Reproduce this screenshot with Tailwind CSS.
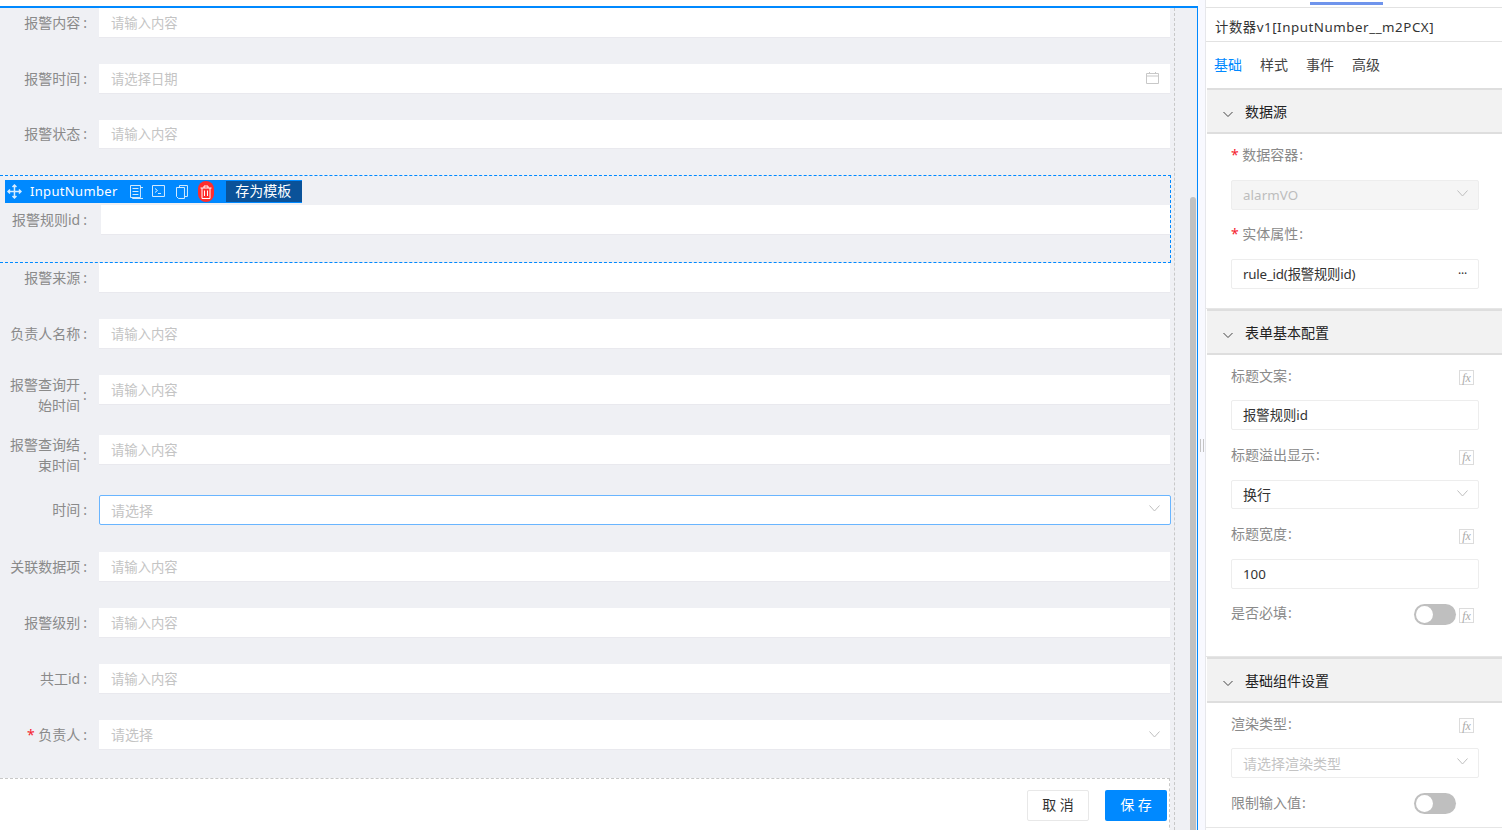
<!DOCTYPE html>
<html lang="zh-CN">
<head>
  <meta charset="UTF-8" />
  <title>表单设计</title>
  <script src="https://cdn.jsdelivr.net/npm/@tailwindcss/browser@4"></script>
</head>
<body class="w-[1502px] h-[830px] overflow-hidden bg-white font-['Noto_Sans','Noto_Sans_CJK_SC',sans-serif] text-[13.33px]">
<div class="flex h-[830px]">

  <!-- canvas -->
  <div class="w-[1198px] pt-[6px] shrink-0">
    <div class="relative h-[824px] border-t-2 border-r-[1.5px] border-[#0089ff] bg-[#eff0f4] overflow-hidden">
      <div class="w-[1170px]">

        <div class="flex h-[30px] mb-[26px]">
          <div class="w-[99px] pr-[12px] text-right text-[14px] leading-[30px] text-[#8a8a8a]">报警内容<span class="ml-[3px]">:</span></div>
          <div class="flex-1 bg-white border-b border-[#e9e9ee] px-[12px] leading-[30px] text-[#c4c4c4]">请输入内容</div>
        </div>
        <div class="flex h-[30px] mb-[26px]">
          <div class="w-[99px] pr-[12px] text-right text-[14px] leading-[30px] text-[#8a8a8a]">报警时间<span class="ml-[3px]">:</span></div>
          <div class="flex-1 flex items-center justify-between bg-white border-b border-[#e9e9ee] pl-[12px] pr-[11px] leading-[30px] text-[#c4c4c4]">
            <span>请选择日期</span>
            <svg width="13" height="13" viewBox="0 0 13 13" fill="none" stroke="#c8c8c8" class="mb-[2px]"><path d="M.5 2.500h12v10H.5zM.5 5h12M3.500 1v2M9.500 1v2"/></svg>
          </div>
        </div>
        <div class="flex h-[29px] mb-[26px]">
          <div class="w-[99px] pr-[12px] text-right text-[14px] leading-[28px] text-[#8a8a8a]">报警状态<span class="ml-[3px]">:</span></div>
          <div class="flex-1 bg-white border-b border-[#e9e9ee] px-[12px] leading-[29px] text-[#c4c4c4]">请输入内容</div>
        </div>

        <!-- selected item -->
        <div class="relative h-[88px] mr-[-1px] border border-l-0 border-dashed border-[#0089ff] pt-[29px]">
          <div class="absolute left-[5px] top-[4px] flex items-center w-[297px] h-[23px] bg-[#0089ff] text-white">
            <svg class="ml-[2px]" width="15" height="15" viewBox="0 0 15 15" fill="none" stroke="#d5ecff" stroke-width="1.500"><path d="M7.500 1v13M1 7.500h13M5.500 3l2-2 2 2M5.500 12l2 2 2-2M3 5.500l-2 2 2 2M12 5.500l2 2-2 2"/></svg>
            <span class="ml-[8px] w-[100px] text-[13px] tracking-[0.35px]">InputNumber</span>
            <svg width="14" height="14" viewBox="0 0 14 14" fill="none" stroke="#d5ecff"><path d="M.5.500h10v12H.5zM10.500 2.500h3v11h-11v-1M2.500 3.500h6M2.500 6.500h6M2.500 9.500h6"/></svg>
            <svg class="ml-[9px]" width="13" height="13" viewBox="0 0 13 13" fill="none" stroke="#d5ecff"><path d="M.5.500h12v11H.5zM3 3.500l2.500 2L3 7.500M6 8.500h3"/></svg>
            <svg class="ml-[11px]" width="12" height="14" viewBox="0 0 12 14" fill="none" stroke="#d5ecff"><path d="M3.500 2.500v-2h8v11H9M.5 2.500h8v11h-6l-2-2z"/></svg>
            <div class="ml-[10px] w-[16px] h-[21px] rounded-[8px] bg-[#ff2d2d] flex items-center justify-center">
              <svg width="12" height="14" viewBox="0 0 12 14" fill="none" stroke="#fff"><path d="M.5 3h11M4 3V1h4v2M2 3v10.500h8V3M4.500 5.500v5.500M7.500 5.500v5.500"/></svg>
            </div>
            <div class="ml-[12px] w-[76px] h-[21px] bg-[#0a5299] pr-[2px] text-center text-[14px] leading-[20px]">存为模板</div>
          </div>
          <div class="flex h-[30px]">
            <div class="w-[101px] pr-[14px] text-right text-[14px] leading-[30px] text-[#8a8a8a]">报警规则id<span class="ml-[3px]">:</span></div>
            <div class="flex-1 bg-white border-b border-[#e9e9ee]"></div>
          </div>
        </div>

        <div class="flex h-[30px] mb-[26px]">
          <div class="w-[99px] pr-[12px] text-right text-[14px] leading-[30px] text-[#8a8a8a]">报警来源<span class="ml-[3px]">:</span></div>
          <div class="flex-1 bg-white border-b border-[#e9e9ee]"></div>
        </div>
        <div class="flex h-[30px] mb-[26px]">
          <div class="w-[99px] pr-[12px] text-right text-[14px] leading-[30px] text-[#8a8a8a]">负责人名称<span class="ml-[3px]">:</span></div>
          <div class="flex-1 bg-white border-b border-[#e9e9ee] px-[12px] leading-[30px] text-[#c4c4c4]">请输入内容</div>
        </div>

        <div class="flex h-[34px] mb-[26px]">
          <div class="flex items-center w-[99px] h-[37px] pl-[10px] overflow-hidden text-[14px] leading-[21px] text-[#8a8a8a] shrink-0">
            <span class="w-[70px] mt-[2px] text-right shrink-0">报警查询开始时间</span><span class="ml-[3px] mt-[2px]">:</span>
          </div>
          <div class="flex-1 h-[30px] bg-white border-b border-[#e9e9ee] px-[12px] leading-[30px] text-[#c4c4c4]">请输入内容</div>
        </div>
        <div class="flex h-[34px] mb-[26px]">
          <div class="flex items-center w-[99px] h-[37px] pl-[10px] overflow-hidden text-[14px] leading-[21px] text-[#8a8a8a] shrink-0">
            <span class="w-[70px] mt-[2px] text-right shrink-0">报警查询结束时间</span><span class="ml-[3px] mt-[2px]">:</span>
          </div>
          <div class="flex-1 h-[30px] bg-white border-b border-[#e9e9ee] px-[12px] leading-[30px] text-[#c4c4c4]">请输入内容</div>
        </div>

        <div class="flex h-[30px] mb-[27px]">
          <div class="w-[99px] pr-[12px] text-right text-[14px] leading-[30px] text-[#8a8a8a]">时间<span class="ml-[3px]">:</span></div>
          <div class="flex-1 flex items-center justify-between mr-[-1px] bg-white border border-[#69b5ff] rounded-[2px] pl-[11px] pr-[10px] text-[14px] text-[#c4c4c4]">
            <span>请选择</span>
            <svg width="11" height="7" viewBox="0 0 11 7" fill="none" stroke="#bfbfbf" class="mb-[3px]"><path d="M.5.500l5 5.500 5-5.500"/></svg>
          </div>
        </div>
        <div class="flex h-[30px] mb-[26px]">
          <div class="w-[99px] pr-[12px] text-right text-[14px] leading-[30px] text-[#8a8a8a]">关联数据项<span class="ml-[3px]">:</span></div>
          <div class="flex-1 bg-white border-b border-[#e9e9ee] px-[12px] leading-[30px] text-[#c4c4c4]">请输入内容</div>
        </div>
        <div class="flex h-[30px] mb-[26px]">
          <div class="w-[99px] pr-[12px] text-right text-[14px] leading-[30px] text-[#8a8a8a]">报警级别<span class="ml-[3px]">:</span></div>
          <div class="flex-1 bg-white border-b border-[#e9e9ee] px-[12px] leading-[30px] text-[#c4c4c4]">请输入内容</div>
        </div>
        <div class="flex h-[30px] mb-[26px]">
          <div class="w-[99px] pr-[12px] text-right text-[14px] leading-[30px] text-[#8a8a8a]">共工id<span class="ml-[3px]">:</span></div>
          <div class="flex-1 bg-white border-b border-[#e9e9ee] px-[12px] leading-[30px] text-[#c4c4c4]">请输入内容</div>
        </div>
        <div class="flex h-[30px] mb-[28px]">
          <div class="w-[99px] pr-[12px] text-right text-[14px] leading-[30px] text-[#8a8a8a]"><span class="text-[#f5222d]">* </span>负责人<span class="ml-[3px]">:</span></div>
          <div class="flex-1 flex items-center justify-between bg-white border-b border-[#e9e9ee] pl-[12px] pr-[10px] text-[14px] text-[#c4c4c4]">
            <span>请选择</span>
            <svg width="11" height="7" viewBox="0 0 11 7" fill="none" stroke="#bfbfbf"><path d="M.5.500l5 5.500 5-5.500"/></svg>
          </div>
        </div>

        <!-- footer -->
        <div class="flex justify-end gap-[16px] h-[60px] bg-white border-t border-r border-dashed border-[#c8c8c8] pt-[11px] pr-[2px]">
          <div class="w-[62px] h-[31px] bg-white border border-[#e8e8e8] rounded-[2px] text-center text-[14px] leading-[27px] text-[#333]">取 消</div>
          <div class="w-[62px] h-[31px] bg-[#0089ff] rounded-[2px] text-center text-[14px] leading-[29px] text-white">保 存</div>
        </div>
      </div>

      <!-- dashed guide and scrollbar -->
      <div class="absolute left-[1174px] top-0 bottom-0 border-l border-dashed border-[#c8c8c8]"></div>
      <div class="absolute left-[1190px] top-[189px] bottom-0 w-[6px] bg-[#c1c1c1] rounded-t-[3px]"></div>
    </div>
  </div>

  <!-- resize gutter -->
  <div class="relative w-[8px] shrink-0 bg-[#f8f9ff] border-r border-[#e6e7eb]">
    <div class="absolute left-[2px] top-[439px] w-[4px] h-[13px] border-x border-[#c4c4c4]"></div>
  </div>

  <!-- properties panel -->
  <div class="flex-1 min-w-0">
    <div class="h-[6px] border-b border-[#e2e2e2]">
      <div class="ml-[104px] w-[73px] h-[3px] mt-[2px] bg-[#6f94ec]"></div>
    </div>
    <div class="h-[35px] pl-[9px] border-b border-[#e2e2e2] leading-[41px] text-[13.33px] tracking-[0.55px] text-[#333] mt-[-1px]">计数器v1[InputNumber__m2PCX]</div>
    <div class="flex gap-[18px] h-[46px] pl-[8px] pb-[1px] items-center text-[14px] text-[#444]">
      <span class="text-[#0089ff]">基础</span><span>样式</span><span>事件</span><span>高级</span>
    </div>

    <div class="flex items-center h-[46px] ml-[1px] bg-[#f2f2f2] border-y-2 border-[#dedede] pl-[16px] text-[14px] text-[#222]">
      <svg width="10" height="7" viewBox="0 0 10 7" fill="none" stroke="#444" class="mt-[7px]"><path d="M.5 1l4.500 4.500L9.500 1"/></svg>
      <span class="ml-[12px]">数据源</span>
    </div>
    <div class="h-[175px] pl-[25px] pr-[23px] border-b border-[#e6e6e6]">
      <div class="h-[46px] pt-[10px] leading-[22px] text-[14px] text-[#8a8a8a]"><span class="text-[#f5222d]">* </span>数据容器<span class="ml-[1px]">:</span></div>
      <div class="flex items-center justify-between h-[30px] bg-[#f5f5f5] border border-[#ededed] rounded-[2px] pl-[11px] pr-[10px] tracking-[0.1px] text-[#bdbdbd]">
        <span class="pt-[1px]">alarmVO</span>
        <svg width="11" height="7" viewBox="0 0 11 7" fill="none" stroke="#bfbfbf" class="mb-[3px]"><path d="M.5.500l5 5.500 5-5.500"/></svg>
      </div>
      <div class="h-[49px] pt-[13px] leading-[22px] text-[14px] text-[#8a8a8a]"><span class="text-[#f5222d]">* </span>实体属性<span class="ml-[1px]">:</span></div>
      <div class="flex items-center justify-between h-[30px] border border-[#ededed] rounded-[2px] pl-[11px] pr-[11px] tracking-[-0.2px] text-[#333]">
        <span class="pt-[1px]">rule_id(报警规则id)</span><span class="text-[12px]">···</span>
      </div>
    </div>

    <div class="flex items-center h-[46px] ml-[1px] bg-[#f2f2f2] border-y-2 border-[#dedede] pl-[16px] text-[14px] text-[#222]">
      <svg width="10" height="7" viewBox="0 0 10 7" fill="none" stroke="#444" class="mt-[7px]"><path d="M.5 1l4.500 4.500L9.500 1"/></svg>
      <span class="ml-[12px]">表单基本配置</span>
    </div>
    <div class="h-[302px] pl-[25px] pr-[23px] border-b border-[#e6e6e6]">
      <div class="flex items-center justify-between h-[45px] pr-[5px] text-[14px] text-[#8a8a8a]">
        <span class="mb-[5px]">标题文案<span class="ml-[1px]">:</span></span>
        <span class="flex items-center justify-center w-[15px] h-[15px] border border-[#dcdcdc] font-['Liberation_Serif',serif] italic text-[12px] text-[#aaa]">fx</span>
      </div>
      <div class="h-[30px] border border-[#ededed] rounded-[2px] px-[11px] leading-[29px] text-[#333]">报警规则id</div>
      <div class="flex items-center justify-between h-[50px] pr-[5px] text-[14px] text-[#8a8a8a]">
        <span class="mb-[2px]">标题溢出显示<span class="ml-[1px]">:</span></span>
        <span class="flex items-center justify-center w-[15px] h-[15px] mt-[4px] border border-[#dcdcdc] font-['Liberation_Serif',serif] italic text-[12px] text-[#aaa]">fx</span>
      </div>
      <div class="flex items-center justify-between h-[29px] border border-[#ededed] rounded-[2px] pl-[11px] pr-[10px] text-[14px] text-[#333]">
        <span>换行</span>
        <svg width="11" height="7" viewBox="0 0 11 7" fill="none" stroke="#bfbfbf" class="mb-[3px]"><path d="M.5.500l5 5.500 5-5.500"/></svg>
      </div>
      <div class="flex items-center justify-between h-[50px] pr-[5px] text-[14px] text-[#8a8a8a]">
        <span class="mb-[2px]">标题宽度<span class="ml-[1px]">:</span></span>
        <span class="flex items-center justify-center w-[15px] h-[15px] mt-[4px] border border-[#dcdcdc] font-['Liberation_Serif',serif] italic text-[12px] text-[#aaa]">fx</span>
      </div>
      <div class="h-[30px] border border-[#ededed] rounded-[2px] px-[11px] leading-[29px] text-[#333]">100</div>
      <div class="flex items-center justify-between h-[50px] pr-[5px] text-[14px] text-[#8a8a8a]">
        <span class="mb-[4px]">是否必填<span class="ml-[1px]">:</span></span>
        <div class="flex items-center gap-[3px]">
          <div class="flex items-center w-[42px] h-[21px] rounded-full bg-[#bfbfbf] pl-[2px]"><div class="w-[17px] h-[17px] rounded-full bg-white"></div></div>
          <span class="flex items-center justify-center w-[15px] h-[15px] mt-[3px] border border-[#dcdcdc] font-['Liberation_Serif',serif] italic text-[12px] text-[#aaa]">fx</span>
        </div>
      </div>
    </div>

    <div class="flex items-center h-[46px] ml-[1px] bg-[#f2f2f2] border-y-2 border-[#dedede] pl-[16px] text-[14px] text-[#222]">
      <svg width="10" height="7" viewBox="0 0 10 7" fill="none" stroke="#444" class="mt-[7px]"><path d="M.5 1l4.500 4.500L9.500 1"/></svg>
      <span class="ml-[12px]">基础组件设置</span>
    </div>
    <div class="h-[125px] pl-[25px] pr-[23px] border-b border-[#e6e6e6]">
      <div class="flex items-center justify-between h-[45px] pr-[5px] text-[14px] text-[#8a8a8a]">
        <span class="mb-[5px]">渲染类型<span class="ml-[1px]">:</span></span>
        <span class="flex items-center justify-center w-[15px] h-[15px] border border-[#dcdcdc] font-['Liberation_Serif',serif] italic text-[12px] text-[#aaa]">fx</span>
      </div>
      <div class="flex items-center justify-between h-[30px] border border-[#ededed] rounded-[2px] pl-[11px] pr-[10px] text-[14px] text-[#c4c4c4]">
        <span>请选择渲染类型</span>
        <svg width="11" height="7" viewBox="0 0 11 7" fill="none" stroke="#bfbfbf" class="mb-[3px]"><path d="M.5.500l5 5.500 5-5.500"/></svg>
      </div>
      <div class="flex items-center justify-between h-[50px] pr-[23px] text-[14px] text-[#8a8a8a]">
        <span class="mb-[2px]">限制输入值<span class="ml-[1px]">:</span></span>
        <div class="flex items-center w-[42px] h-[21px] rounded-full bg-[#bfbfbf] pl-[2px]"><div class="w-[17px] h-[17px] rounded-full bg-white"></div></div>
      </div>
    </div>
  </div>
</div>
</body>
</html>
